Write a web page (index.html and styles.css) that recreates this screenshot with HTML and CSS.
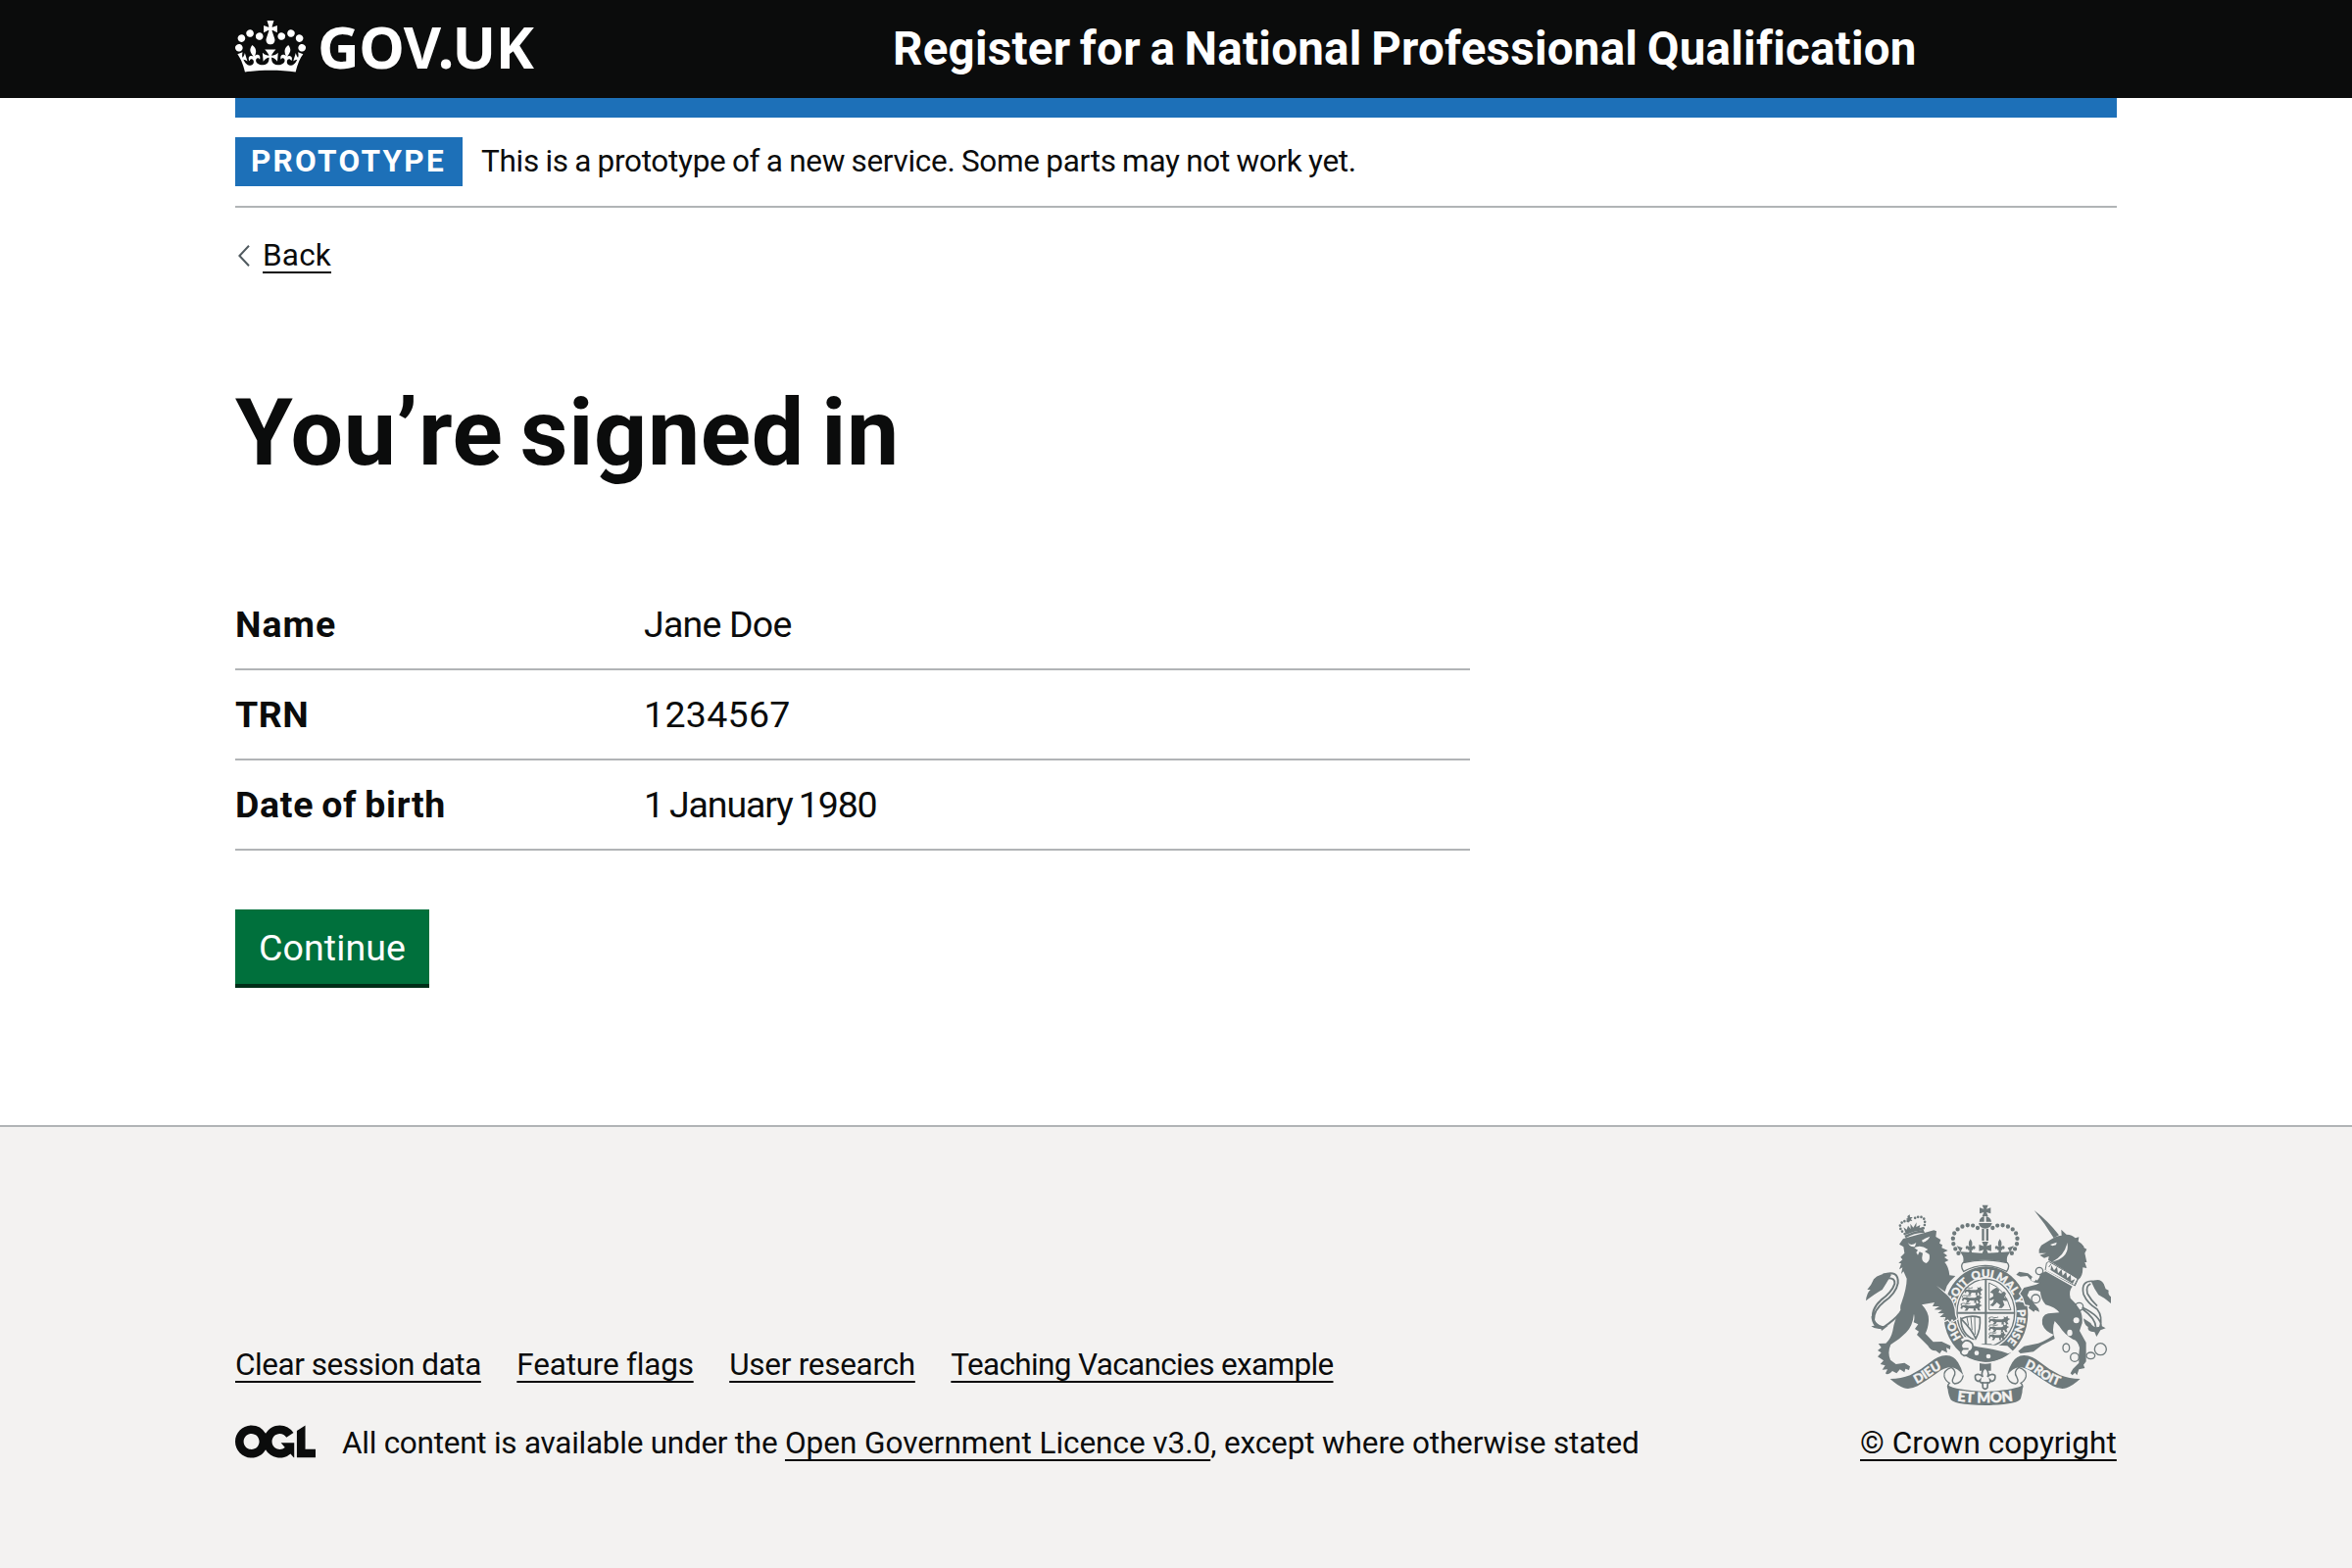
FILE: index.html
```
<!DOCTYPE html>
<html lang="en">
<head>
<meta charset="utf-8">
<title>You’re signed in - Register for a National Professional Qualification</title>
<link rel="stylesheet" href="styles.css">
</head>
<body>
<header class="header">
  <div class="container header-inner">
    <a class="logo" href="#">
      <svg class="logo-crown" viewBox="0 0 132 97" width="72" height="53" aria-hidden="true"><path fill="currentColor" fill-rule="evenodd" d="M25 30.2c3.5 1.5 7.7-.2 9.1-3.7 1.5-3.6-.2-7.8-3.9-9.2-3.6-1.4-7.6.3-9.1 3.9-1.4 3.5.3 7.5 3.9 9zM9 39.5c3.6 1.5 7.8-.2 9.2-3.7 1.5-3.6-.2-7.8-3.9-9.1-3.6-1.5-7.6.2-9.1 3.8-1.4 3.5.3 7.5 3.8 9zM4.4 57.2c3.5 1.5 7.7-.2 9.1-3.8 1.5-3.6-.2-7.7-3.9-9.1-3.5-1.5-7.6.3-9.1 3.8-1.4 3.5.3 7.6 3.9 9.1zm38.3-21.4c3.5 1.5 7.7-.2 9.1-3.8 1.5-3.6-.2-7.7-3.9-9.1-3.6-1.5-7.6.3-9.1 3.8-1.3 3.6.4 7.7 3.9 9.1zm64.4-5.6c-3.6 1.5-7.8-.2-9.1-3.7-1.5-3.6.2-7.8 3.8-9.2 3.6-1.4 7.7.3 9.2 3.9 1.3 3.5-.4 7.5-3.9 9zm15.9 9.3c-3.6 1.5-7.7-.2-9.1-3.7-1.5-3.6.2-7.8 3.7-9.1 3.6-1.5 7.7.2 9.2 3.8 1.5 3.5-.3 7.5-3.8 9zm4.7 17.7c-3.6 1.5-7.8-.2-9.2-3.8-1.5-3.6.2-7.7 3.9-9.1 3.6-1.5 7.7.3 9.2 3.8 1.3 3.5-.4 7.6-3.9 9.1zM89.3 35.8c-3.6 1.5-7.8-.2-9.2-3.8-1.4-3.6.2-7.7 3.9-9.1 3.6-1.5 7.7.3 9.2 3.8 1.4 3.6-.3 7.7-3.9 9.1zM69.7 17.7l8.9 4.7V9.3l-8.9 2.8c-.2-.3-.5-.6-.9-.9L72.4 0H59.6l3.5 11.2c-.3.3-.6.5-.9.9l-8.8-2.8v13.1l8.8-4.7c.3.3.6.7.9.9l-5 15.4v.1c-.2.8-.4 1.6-.4 2.4 0 4.1 3.1 7.5 7 8.1h.2c.3 0 .7.1 1 .1.4 0 .7 0 1-.1h.2c4-.6 7.1-4.1 7.1-8.1 0-.8-.1-1.7-.4-2.4V34l-5.1-15.4c.4-.2.7-.6 1-.9zM66 92.8c16.9 0 32.8 1.1 47.1 3.2 4-16.9 8.9-26.7 14-33.5l-9.6-3.4c1 4.9 1.1 7.2 0 10.2-1.5-1.4-3-4.3-4.2-8.7L108.6 76c2.8-2 5-3.2 7.5-3.3-4.4 9.4-10 11.9-13.6 11.2-4.3-.8-6.3-4.6-5.6-7.9 1-4.7 5.7-5.9 8-.5 4.3-8.7-3-11.4-7.6-8.8 7.1-7.2 7.9-13.5 2.1-21.1-8 6.1-8.1 12.3-4.5 20.8-4.7-5.4-12.1-2.5-9.5 6.2 3.4-5.2 7.9-2 7.2 3.1-.6 4.3-6.4 7.8-13.5 7.2-10.3-.9-10.9-8-11.2-13.8 2.5-.5 7.1 1.8 11 7.3L80.2 60c-4.1 4.4-8 5.3-12.3 5.4 1.4-4.4 8-11.6 8-11.6H55.5s6.4 7.2 7.9 11.6c-4.2-.1-8-1-12.3-5.4l1.4 16.4c3.9-5.5 8.5-7.7 10.9-7.3-.3 5.8-.9 12.8-11.1 13.8-7.2.6-12.9-2.9-13.5-7.2-.7-5 3.8-8.3 7.1-3.1 2.7-8.7-4.6-11.6-9.4-6.2 3.7-8.5 3.6-14.7-4.6-20.8-5.8 7.6-5 13.9 2.2 21.1-4.7-2.6-11.9.1-7.7 8.8 2.3-5.5 7.1-4.2 8.1.5.7 3.3-1.3 7.1-5.7 7.9-3.5.7-9-1.8-13.5-11.2 2.5.1 4.7 1.3 7.5 3.3l-4.7-15.4c-1.2 4.4-2.7 7.2-4.3 8.7-1.1-3-.9-5.3 0-10.2l-9.5 3.4c5 6.9 9.9 16.7 14 33.5 14.8-2.1 30.8-3.2 47.7-3.2z"/></svg>
      <span class="logo-text">GOV.UK</span>
    </a>
    <a class="service-name" href="#">Register for a National Professional Qualification</a>
  </div>
</header>

<div class="container">
  <div class="blue-bar"></div>
  <div class="phase-banner">
    <strong class="phase-tag">PROTOTYPE</strong>
    <span class="phase-text">This is a prototype of a new service. Some parts may not work yet.</span>
  </div>
  <a class="back-link" href="#">
    <svg width="12" height="22" viewBox="0 0 12 22" aria-hidden="true"><path d="M11 .8 1.4 11 11 21.2" fill="none" stroke="#505a5f" stroke-width="2"/></svg>
    <span class="back-text">Back</span>
  </a>
  <main class="main">
    <h1 class="heading">You’re signed in</h1>
    <dl class="summary">
      <div class="summary-row"><dt class="key key-name">Name</dt><dd class="value value-name">Jane Doe</dd></div>
      <div class="summary-row"><dt class="key key-trn">TRN</dt><dd class="value value-trn">1234567</dd></div>
      <div class="summary-row"><dt class="key key-dob">Date of birth</dt><dd class="value value-dob">1 January 1980</dd></div>
    </dl>
    <button class="button" type="button">Continue</button>
  </main>
</div>

<footer class="footer">
  <div class="container footer-inner">
    <div class="footer-meta">
      <nav class="footer-links">
        <a class="link link-clear" href="#">Clear session data</a>
        <a class="link link-flags" href="#">Feature flags</a>
        <a class="link link-research" href="#">User research</a>
        <a class="link link-teaching" href="#">Teaching Vacancies example</a>
      </nav>
      <div class="licence">
        <svg class="ogl" viewBox="0 0 483.2 195.7" width="82" height="34" aria-hidden="true"><path fill="currentColor" d="M421.5 142.8V.1l-50.7 32.3v161.1h112.4v-50.7zm-122.3-9.6A47.12 47.12 0 0 1 221 97.8c0-26 21.1-47.1 47.1-47.1 16.7 0 31.4 8.7 39.7 21.8l42.7-27.2A97.63 97.63 0 0 0 268.1 0c-36.5 0-68.3 20.1-85.1 49.7A98 98 0 0 0 97.8 0C43.9 0 0 43.9 0 97.8s43.9 97.8 97.8 97.8c36.5 0 68.3-20.1 85.1-49.7a97.76 97.76 0 0 0 149.6 25.4l19.4 22.2h3v-87.8h-80l24.3 27.5zM97.8 145c-26 0-47.1-21.1-47.1-47.1s21.1-47.1 47.1-47.1 47.1 21.1 47.1 47.1S123.8 145 97.8 145"/></svg>
        <span class="licence-text"><span class="licence-lead">All content is available under the </span><a class="link licence-link" href="#">Open Government Licence v3.0</a><span class="licence-tail">, except where otherwise stated</span></span>
      </div>
    </div>
    <div class="copyright">
      <svg class="arms" viewBox="54 51 786 630" width="262" height="210" aria-hidden="true">
        <defs>
          <path id="garter" d="M439 505A97 112 0 0 1 439 281A97 112 0 0 1 439 505"/>
          <path id="dieu" d="M206 615Q240 603 274 578Q298 560 332 550"/>
          <path id="droit" d="M538 550Q572 558 602 581Q632 604 690 620"/>
          <path id="mon" d="M342 657Q437 671 532 657"/>
          <g id="fleur"><path d="M0-20Q-9-8-3 4Q-14-4-15 6Q-14 14-8 10Q-8 16-3 14L-5 24H5L3 14Q8 16 8 10Q14 14 15 6Q14-4 3 4Q9-8 0-20Z"/></g>
          <g id="patty"><path d="M-9-17H9L4-5 17-9V9L4 5 9 17H-9L-4 5-17 9V-9L-4-5Z"/></g>
          <g id="passant"><path d="M0 10q2-9 9-8q6-4 12 1h18l6-3-2-7 6 3 6-5 1 8 7 3-6 4-3 6 4 9h-7l-4-8-4 2 2 7h-8l1-8-14-1-5 9h-8l5-8-6-5q-6-1-5 6-7 0-5-5z"/><path d="M3 4Q-3-6 10-5Q20-1 28-5" fill="none" stroke="currentColor" stroke-width="3"/></g>
          <g id="ribbon">
            <path d="M146 591Q180 591 207 580Q240 564 268 541Q292 520 318 519Q342 520 354 541Q364 556 370 580Q352 558 334 556Q310 556 290 573Q258 596 230 613Q206 625 188 619Q172 614 146 591Z"/>
            <path d="M334 556Q308 564 312 584Q316 598 328 604Q318 614 326 622M370 580Q366 604 344 606Q332 602 340 586Q352 568 334 556" fill="none" stroke="currentColor" stroke-width="4"/>
          </g>
        </defs>
        <g class="ink">
          <!-- imperial crown -->
          <use href="#patty" x="437" y="76"/>
          <path d="M419 110Q420 96 434 93V110ZM440 93Q454 96 456 110H440ZM417 114H458Q456 129 437 131Q419 129 417 114Z"/>
          <path d="M427 131H434V168H427ZM440 131H447V168H440Z"/>
          <g class="pearls"><path d="M414 129Q395 114 366 125Q332 140 340 178Q343 192 356 207"/><path d="M460 129Q479 114 508 125Q542 140 534 178Q531 192 518 207"/></g>
          <use href="#patty" transform="translate(437 190) scale(1.1)"/>
          <use href="#fleur" x="392" y="183"/><use href="#fleur" x="482" y="183"/>
          <path d="M350 184L368 190 362 202 384 203 437 207 490 203 512 202 506 190 525 184 505 216Q502 226 505 236Q437 217 369 236Q372 226 369 216Z"/>
          <path d="M369 236Q437 219 505 236Q514 246 503 262Q437 226 371 262Q360 246 369 236Z" fill="none" stroke="currentColor" stroke-width="4"/>
          <!-- garter and shield -->
          <path fill-rule="evenodd" d="M439 247A129 146 0 1 1 438.900 247ZM439 279A94 110 0 1 0 439.100 279Z"/>
          <ellipse cx="439" cy="389" rx="88" ry="103" fill="none" stroke="currentColor" stroke-width="4"/>
          <path d="M436 288H442V386H526V392H442V484H456L466 494H412L422 484H436V392H352V386H436Z"/>
          <use href="#passant" transform="translate(374 316) scale(.9 .85)"/><use href="#passant" transform="translate(366 340) scale(1 .85)"/><use href="#passant" transform="translate(362 364) scale(1.050 .85)"/>
          <use href="#passant" transform="translate(448 406) scale(1.050 .85)"/><use href="#passant" transform="translate(448 430) scale(1 .85)"/><use href="#passant" transform="translate(448 454) scale(.85)"/>
          <path d="M449 380V297Q498 314 516 380Z" fill="none" stroke="currentColor" stroke-width="3"/>
          <path d="M460 318l12-7 9 8-3 8 8 2 9-6 6 7-6 12 10 3-2 8-12-2 5 14-8 9h-10l5-9-10-8-12 12-9-3 9-9 3-10-12 5-2-6 12-8-1-8-9-4z"/>
          <path d="M363 407Q392 394 421 403Q424 440 408 468Q396 440 363 407Q362 452 403 471" fill="none" stroke="currentColor" stroke-width="5"/>
          <path d="M381 402L386 428M393 400L397 442M405 400L406 456" stroke="currentColor" stroke-width="3"/>
          <!-- garter strap and buckle -->
          <path class="cut" d="M362 470L378 462L430 486L505 490L524 508L488 520L440 512L384 494Z"/>
          <path d="M384 484Q400 492 432 496Q470 500 508 514Q478 538 438 539Q400 534 378 518Z"/>
          <path class="buckle" d="M374 475Q356 488 369 499Q354 512 372 520Q386 520 388 508Q404 500 398 484Q388 470 374 475ZM369 499H386"/>
          <g class="cut"><circle cx="411" cy="512" r="7"/><circle cx="447" cy="522" r="7"/></g>
          <g class="motto ring-text">
            <text><textPath href="#garter" startOffset="17.5%">HO</textPath></text>
            <text><textPath href="#garter" startOffset="35.8%">SOIT</textPath></text>
            <text><textPath href="#garter" startOffset="48.600%">QUI</textPath></text>
            <text><textPath href="#garter" startOffset="60.200%">MAL</textPath></text>
            <text><textPath href="#garter" startOffset="69%">Y</textPath></text>
            <text><textPath href="#garter" startOffset="80.800%">PENSE</textPath></text>
          </g>
          <!-- pendant -->
          <path d="M420 543Q437 547 455 543V566H420Z"/>
          <g class="badge"><path d="M437 557Q422 570 430 585Q418 572 407 580Q404 596 417 599L422 594Q420 604 429 603L430 618Q437 626 444 618L445 603Q454 604 452 594L457 599Q470 596 467 580Q456 572 444 585Q452 570 437 557Z"/><path d="M426 603H448"/></g>
          <!-- scrolls -->
          <use href="#ribbon"/><use href="#ribbon" transform="translate(874 0) scale(-1 1)"/>
          <path d="M322 610Q346 626 437 630Q528 626 552 610Q552 634 546 651Q540 670 437 672Q334 670 330 651Q322 634 322 610Z"/>
          <g class="motto">
            <text class="dieu"><textPath href="#dieu" startOffset="48%">DIEU</textPath></text>
            <text class="dieu"><textPath href="#droit" startOffset="47%">DROIT</textPath></text>
            <text class="mon"><textPath href="#mon" startOffset="50%">ET MON</textPath></text>
          </g>
          <!-- lion -->
          <path class="beast" d="M186 162Q232 150 280 136L288 139 286 156 301 165 297 176 306 181 304 190 323 198 309 205 321 214 312 219 325 228 313 234Q325 246 328 274L346 276 330 292Q318 305 314 324L288 306 322 336Q344 356 345 396L350 408 340 414 336 407 330 417 323 409 312 414 316 402 298 402 311 391 292 390 305 380 281 379 297 369 276 369 282 357 243 364Q266 388 264 414Q262 438 254 452L278 478 304 477 331 490 330 501 318 496 321 511 305 503 298 514 286 505Q270 506 262 490L238 466 228 456 234 446 222 438 232 424 218 418Q222 406 219 392Q215 430 195 449Q175 470 148 486Q137 510 147 533L164 546 190 542 207 553 204 564 193 560 190 571 176 562 166 574 153 567Q138 582 132 574L138 562 122 563 131 550 116 546 126 535 108 523 119 511 108 504 119 495 110 483 133 482Q148 470 154 444Q160 404 178 380Q176 368 181 358Q197 312 197 284L187 262 180 270 184 250 174 256 180 238 172 236 184 226 178 218 190 206 187 187 174 179Z"/>
          <path d="M190 152Q216 139 248 134L252 144Q218 144 194 160Z"/>
          <path d="M195 149L187 127 197 134 201 122 209 132 208 116 217 128 227 112 226 126 238 120 236 129 249 125 246 136Q220 138 195 149Z"/>
          <g class="small-pearls"><path d="M191 147Q174 134 177 120Q184 104 205 109M248 130Q257 112 248 98Q232 90 214 104"/></g>
          <path d="M199 93l7-5 1 8 8 0-5 6 4 6-7-1-4 6-3-8-6-3 6-3z"/>
          <g class="cut">
            <path d="M200 174Q210 186 226 174L222 186Q208 190 200 174ZM243 167Q254 160 268 155Q262 169 246 173ZM220 190Q238 178 262 195L252 201 266 210Q270 230 256 237Q242 232 244 218L246 206 236 202 231 212 226 204 231 197Z"/>
          </g>
          <path d="M124 272Q173 256 170 298Q164 330 126 356Q96 380 96 410Q100 432 126 433Q160 410 174 392M140 283Q162 282 160 300Q152 325 118 350Q84 380 96 415" fill="none" stroke="currentColor" stroke-width="6"/>
          <path d="M72 352Q74 328 86 318L76 318Q88 306 96 286Q104 276 118 272Q140 262 150 272Q132 302 122 318Q100 330 72 352ZM88 398L103 418Q118 434 140 428L120 444 118 438Q100 440 88 430L98 428Q90 418 88 398Z"/>
          <!-- unicorn -->
          <path d="M587 75Q630 108 663 151L647 160Q622 118 587 75Z"/>
          <path d="M602 195L609 182 636 166Q650 154 671 152L670 134 686 149Q704 150 713 160L724 157 722 170Q738 178 740 190L748 194 742 206 748 234 742 234 748 252 736 250Q736 280 722 287Q680 258 640 234L630 227 632 216 618 221 604 212 624 206 602 206Z"/>
          <path d="M625 236L632 232 722 284 712 306 621 259ZM632 249L639 239M721 284L710 304" fill="none" stroke="currentColor" stroke-width="3"/>
          <path d="M629 253L637 258 640 243 648 259 657 248 660 268 671 256 674 275 685 263 688 283 699 272 700 291 712 286 705 300Z"/>
          <path class="beast" d="M622 262L704 308Q692 322 698 344Q714 358 726 378Q736 394 734 420L726 444 746 480V538L738 548 742 558 724 562 718 580 712 572 704 580 698 574 706 560 724 542Q722 520 726 496Q720 472 706 470Q680 456 664 430L650 414Q640 440 650 468L610 488 585 508 545 513 538 506 556 491 600 482Q632 470 647 456Q620 446 612 424Q608 396 630 391L664 388Q652 372 622 364Q606 344 606 324Q592 316 572 322L566 336 600 376 603 386 590 380 586 386 570 374 573 366 560 364 552 340 544 330 556 312 594 302 604 296Q590 300 578 290L566 276 545 278 532 272 541 263 568 268 596 290Q604 282 606 270Z"/>
          <path d="M736 378Q775 406 776 434M734 372Q792 400 792 430M775 293Q728 285 738 332Q750 360 780 378Q798 400 788 436M760 300Q744 306 750 330Q762 352 780 368" fill="none" stroke="currentColor" stroke-width="5"/>
          <path d="M762 294Q788 280 800 300L806 316 815 320Q812 332 822 340L822 360Q804 344 784 334Q772 318 762 294ZM738 406L760 420Q770 440 792 428L806 436 790 442 778 462 772 448Q748 446 752 432Q740 426 738 406Z"/>
          <g class="chain"><circle cx="603" cy="261" r="11"/><circle cx="592" cy="346" r="13"/><circle cx="725" cy="370" r="12"/><ellipse cx="685" cy="496" rx="10" ry="13"/><circle cx="711" cy="525" r="13"/><ellipse cx="760" cy="520" rx="13" ry="10"/><circle cx="790" cy="500" r="18"/></g>
          <g class="cut"><circle cx="716" cy="412" r="9"/><ellipse cx="696" cy="450" rx="8" ry="10"/><circle cx="585" cy="286" r="7"/><path d="M636 180L656 173 654 181 643 184ZM688 174Q698 218 642 233Q682 212 688 174Z"/></g>
        </g>
      </svg>
      <a class="link copyright-link" href="#">© Crown copyright</a>
    </div>
  </div>
</footer>
</body>
</html>
```
FILE: styles.css
```
* { box-sizing: border-box; }

body {
  margin: 0;
  background: #fff;
  color: #0b0c0c;
  font-family: Roboto, "Noto Sans", sans-serif;
  font-size: 31.5px;
  line-height: 40px;
}

a { color: inherit; text-decoration: none; }

.container { width: 1920px; margin: 0 auto; }

/* Header */
.header { height: 100px; background: #0b0c0c; color: #fff; }
.header-inner { display: flex; height: 100px; }
.logo { display: flex; align-items: flex-start; width: 670px; padding-top: 21px; }
.logo-crown { display: block; flex: none; }
.logo-text {
  margin: -4px 0 0 12px;
  font-family: "Noto Sans", sans-serif;
  font-weight: 700;
  font-size: 59px;
  line-height: 60px;
  letter-spacing: -0.5px;
}
.service-name {
  padding-left: 1px;
  font-size: 47.5px;
  font-weight: 700;
  line-height: 100px;
  letter-spacing: 0.25px;
  word-spacing: -2.5px;
  white-space: nowrap;
}

.blue-bar { height: 20px; background: #1d70b8; }

/* Phase banner */
.phase-banner {
  display: flex;
  align-items: center;
  padding: 20px 0;
  border-bottom: 2px solid #b1b4b6;
  line-height: 50px;
}
.phase-tag {
  width: 232px;
  margin-right: 19px;
  padding-left: 16px;
  background: #1d70b8;
  color: #fff;
  letter-spacing: 2.3px;
}
.phase-text { letter-spacing: -0.3px; word-spacing: -1px; white-space: nowrap; }

/* Back link */
.back-link { display: flex; align-items: center; gap: 13px; margin: 29px 0 0 3px; }
.back-text,
.link {
  text-decoration: underline;
  text-decoration-thickness: 2px;
  text-underline-offset: 6px;
  text-decoration-skip-ink: none;
}
.back-text { letter-spacing: 0.2px; }

/* Main */
.main { padding: 110px 0 140px; }
.heading { margin: 0 0 100px; font-size: 95px; line-height: 101px; letter-spacing: 0.65px; word-spacing: -7px; }

.summary { width: 1260px; margin: 0 0 60px; font-size: 37.5px; }
.summary-row { display: flex; padding: 20px 0; border-bottom: 2px solid #b1b4b6; line-height: 50px; }
.key { width: 417px; font-weight: 700; }
.value { margin: 0; }
.key-name { letter-spacing: 1px; }
.key-trn { letter-spacing: 0.5px; }
.key-dob { letter-spacing: 0.7px; word-spacing: -2px; }
.value-name { letter-spacing: -0.8px; }
.value-trn { letter-spacing: 0.3px; }
.value-dob { letter-spacing: -1.15px; word-spacing: -2px; }

.button {
  display: block;
  width: 198px;
  height: 80px;
  padding: 2px 0 0;
  border: 0;
  border-bottom: 4px solid #002d18;
  background: #00703c;
  color: #fff;
  font: inherit;
  font-size: 37.5px;
  letter-spacing: 0.1px;
}

/* Footer */
.footer { height: 452px; padding-top: 77px; border-top: 2px solid #b1b4b6; background: #f3f2f1; }
.footer-inner { display: flex; justify-content: space-between; align-items: flex-end; }
.footer-meta { display: flex; flex-direction: column; gap: 40px; }
.footer-links { display: flex; gap: 36.5px; }
.link-clear { letter-spacing: -0.46px; }
.link-flags { letter-spacing: -0.22px; }
.link-research { letter-spacing: -0.28px; }
.link-teaching { letter-spacing: -0.65px; }

.licence { display: flex; align-items: center; }
.ogl { margin-right: 27px; margin-top: -5px; }
.licence-text { white-space: pre; }
.licence-lead { letter-spacing: -0.26px; }
.licence-link { letter-spacing: -0.04px; }
.licence-tail { letter-spacing: -0.13px; }

.copyright { display: flex; flex-direction: column; gap: 16px; width: 262px; }
.copyright-link { letter-spacing: 0.06px; white-space: nowrap; }

/* Royal arms */
.arms { display: block; color: #6e797b; }
.ink { fill: currentColor; }
.cut { fill: #f3f2f1; }
.beast { stroke: #f3f2f1; stroke-width: 7px; paint-order: stroke; }
.buckle { fill: #f3f2f1; stroke: currentColor; stroke-width: 5px; }
.pearls { fill: none; stroke: currentColor; stroke-width: 13px; stroke-linecap: round; stroke-dasharray: 0 16.4; }
.small-pearls { fill: none; stroke: currentColor; stroke-width: 8px; stroke-linecap: round; stroke-dasharray: 0 10; }
.chain { fill: none; stroke: currentColor; stroke-width: 4px; }
.badge { fill: #f3f2f1; stroke: currentColor; stroke-width: 5px; }
.motto { fill: #f3f2f1; stroke: #f3f2f1; stroke-width: 1.2px; font-family: Lato, sans-serif; font-weight: 900; text-anchor: middle; }
.ring-text { font-size: 34px; }
.dieu { font-size: 38px; }
.mon { font-size: 44px; }
```
